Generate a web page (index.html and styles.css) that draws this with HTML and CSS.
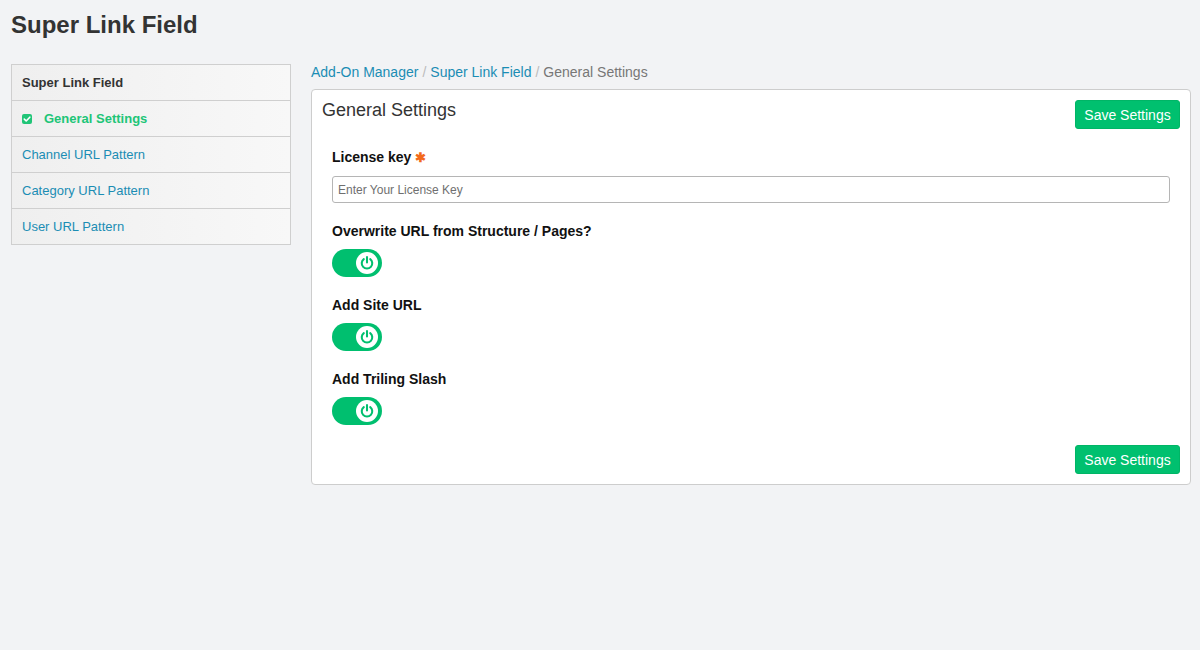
FILE: index.html
```html
<!DOCTYPE html>
<html>
<head>
<meta charset="utf-8">
<link rel="stylesheet" href="styles.css">
</head>
<body>
<h1 class="page-title">Super Link Field</h1>
<div class="layout">
  <nav class="sidebar">
    <div class="side-item side-head">Super Link Field</div>
    <a class="side-item side-active" href="#"><span class="check"><svg viewBox="0 0 10 10" width="10" height="10"><rect width="10" height="10" rx="2" fill="#20c577"/><path d="M2.3 5.1 L4.2 7 L7.8 3.2" fill="none" stroke="#fff" stroke-width="1.6" stroke-linecap="round" stroke-linejoin="round"/></svg></span>General Settings</a>
    <a class="side-item" href="#">Channel URL Pattern</a>
    <a class="side-item" href="#">Category URL Pattern</a>
    <a class="side-item" href="#">User URL Pattern</a>
  </nav>
  <main class="main">
    <div class="breadcrumb"><a href="#">Add-On Manager</a><span class="sep">/</span><a href="#">Super Link Field</a><span class="sep">/</span><span class="current">General Settings</span></div>
    <section class="panel">
      <div class="panel-head">
        <h2 class="panel-title">General Settings</h2>
        <button class="btn">Save Settings</button>
      </div>
      <div class="form">
        <div class="field">
          <label class="label">License key <span class="req">✱</span></label>
          <input class="input" type="text" placeholder="Enter Your License Key">
        </div>
        <div class="field">
          <label class="label">Overwrite URL from Structure / Pages?</label>
          <div class="toggle"><span class="knob"><svg viewBox="0 0 14 14" width="16" height="16"><path d="M4.2 3.6 A4.6 4.6 0 1 0 9.8 3.6" fill="none" stroke="#00bf6f" stroke-width="1.8" stroke-linecap="round"/><path d="M7 1.8 V6.6" fill="none" stroke="#00bf6f" stroke-width="1.8" stroke-linecap="round"/></svg></span></div>
        </div>
        <div class="field">
          <label class="label">Add Site URL</label>
          <div class="toggle"><span class="knob"><svg viewBox="0 0 14 14" width="16" height="16"><path d="M4.2 3.6 A4.6 4.6 0 1 0 9.8 3.6" fill="none" stroke="#00bf6f" stroke-width="1.8" stroke-linecap="round"/><path d="M7 1.8 V6.6" fill="none" stroke="#00bf6f" stroke-width="1.8" stroke-linecap="round"/></svg></span></div>
        </div>
        <div class="field">
          <label class="label">Add Triling Slash</label>
          <div class="toggle"><span class="knob"><svg viewBox="0 0 14 14" width="16" height="16"><path d="M4.2 3.6 A4.6 4.6 0 1 0 9.8 3.6" fill="none" stroke="#00bf6f" stroke-width="1.8" stroke-linecap="round"/><path d="M7 1.8 V6.6" fill="none" stroke="#00bf6f" stroke-width="1.8" stroke-linecap="round"/></svg></span></div>
        </div>
      </div>
      <div class="panel-foot">
        <button class="btn">Save Settings</button>
      </div>
    </section>
  </main>
</div>
</body>
</html>
```

FILE: styles.css
```css
* { box-sizing: border-box; }
html, body { margin: 0; padding: 0; }
body {
  background: #f2f3f5;
  font-family: "Liberation Sans", Arial, sans-serif;
  color: #333;
  width: 1200px;
  height: 650px;
  overflow: hidden;
}
.page-title {
  margin: 0;
  padding: 11px 0 0 11px;
  font-size: 24px;
  line-height: 28px;
  font-weight: bold;
  color: #333;
}
.layout {
  display: flex;
  gap: 20px;
  padding: 25px 9px 0 11px;
  align-items: flex-start;
}
.sidebar {
  width: 280px;
  flex: 0 0 280px;
  border: 1px solid #cfcfcf;
  border-bottom: none;
}
.side-item {
  display: flex;
  align-items: center;
  height: 36px;
  padding: 0 10px;
  font-size: 13px;
  color: #1b8db4;
  text-decoration: none;
  background: linear-gradient(to right, #efefef, #f8f8f8);
  border-bottom: 1px solid #cfcfcf;
}
.side-head {
  font-weight: bold;
  color: #333;
}
.side-active {
  font-weight: bold;
  color: #20c577;
}
.check {
  display: inline-flex;
  width: 10px;
  height: 10px;
  margin-right: 12px;
}
.main {
  flex: 1;
  min-width: 0;
}
.breadcrumb {
  font-size: 14px;
  line-height: 17px;
  margin-bottom: 8px;
  color: #777;
}
.breadcrumb a {
  color: #1b8db4;
  text-decoration: none;
}
.breadcrumb .sep {
  color: #bbb;
  padding: 0 4px;
}
.panel {
  background: #fff;
  border: 1px solid #cdcdcd;
  border-radius: 4px;
  padding: 10px 10px 10px 10px;
}
.panel-head {
  display: flex;
  justify-content: space-between;
  align-items: flex-start;
}
.panel-title {
  margin: 0;
  font-size: 18px;
  line-height: 20px;
  font-weight: normal;
  color: #333;
}
.btn {
  height: 29px;
  width: 105px;
  padding: 0;
  border: 1px solid #00b566;
  border-radius: 3px;
  background: #00c06f;
  color: #fff;
  font-family: "Liberation Sans", Arial, sans-serif;
  font-size: 14px;
  cursor: pointer;
}
.form {
  padding: 19px 10px 0 10px;
  display: flex;
  flex-direction: column;
  gap: 19px;
}
.field {
  display: flex;
  flex-direction: column;
  gap: 9px;
  align-items: flex-start;
}
.label {
  font-size: 14px;
  line-height: 18px;
  font-weight: bold;
  color: #111;
}
.req {
  color: #f26a1b;
  font-size: 13px;
}
.input {
  width: 100%;
  height: 27px;
  border: 1px solid #b5b5b5;
  border-radius: 3px;
  padding: 0 5px;
  font-family: "Liberation Sans", Arial, sans-serif;
  font-size: 12px;
  color: #333;
}
.input::placeholder {
  color: #6f6f6f;
}
.toggle {
  width: 50px;
  height: 28px;
  border-radius: 14px;
  background: #00bf6f;
  display: flex;
  align-items: center;
  justify-content: flex-end;
  padding-right: 4px;
}
.knob {
  width: 22px;
  height: 22px;
  border-radius: 50%;
  background: #fff;
  display: flex;
  align-items: center;
  justify-content: center;
}
.panel-foot {
  display: flex;
  justify-content: flex-end;
  margin-top: 20px;
}
```
